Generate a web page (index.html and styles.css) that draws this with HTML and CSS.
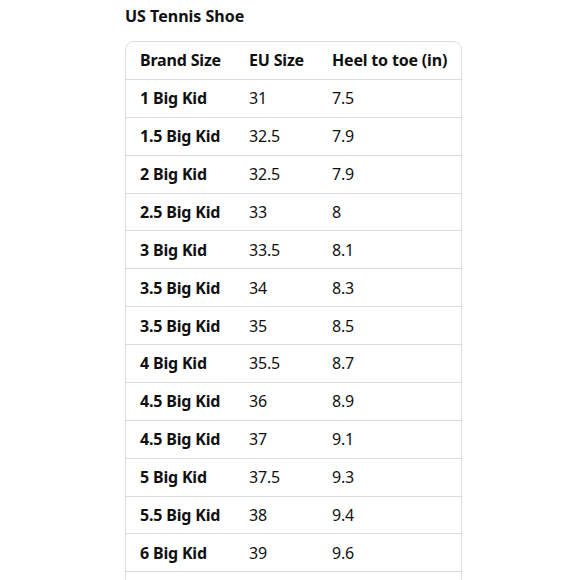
FILE: index.html
```html
<!DOCTYPE html>
<html>
<head>
<meta charset="utf-8">
<link rel="stylesheet" href="styles.css">
</head>
<body>
<div class="wrap">
  <h2 class="title">US Tennis Shoe</h2>
  <div class="card">
    <table class="sizes">
      <thead>
        <tr><th>Brand Size</th><th>EU Size</th><th>Heel to toe (in)</th></tr>
      </thead>
      <tbody>
        <tr><th>1 Big Kid</th><td>31</td><td>7.5</td></tr>
        <tr><th>1.5 Big Kid</th><td>32.5</td><td>7.9</td></tr>
        <tr><th>2 Big Kid</th><td>32.5</td><td>7.9</td></tr>
        <tr><th>2.5 Big Kid</th><td>33</td><td>8</td></tr>
        <tr><th>3 Big Kid</th><td>33.5</td><td>8.1</td></tr>
        <tr><th>3.5 Big Kid</th><td>34</td><td>8.3</td></tr>
        <tr><th>3.5 Big Kid</th><td>35</td><td>8.5</td></tr>
        <tr><th>4 Big Kid</th><td>35.5</td><td>8.7</td></tr>
        <tr><th>4.5 Big Kid</th><td>36</td><td>8.9</td></tr>
        <tr><th>4.5 Big Kid</th><td>37</td><td>9.1</td></tr>
        <tr><th>5 Big Kid</th><td>37.5</td><td>9.3</td></tr>
        <tr><th>5.5 Big Kid</th><td>38</td><td>9.4</td></tr>
        <tr><th>6 Big Kid</th><td>39</td><td>9.6</td></tr>
        <tr class="empty"><th></th><td></td><td></td></tr>
      </tbody>
    </table>
  </div>
</div>
</body>
</html>
```
FILE: styles.css
```css
html, body {
  margin: 0;
  padding: 0;
  background: #ffffff;
}
body {
  font-family: "Noto Sans", "DejaVu Sans", sans-serif;
  color: #0f1111;
  overflow: hidden;
}
.wrap {
  padding: 4px 0 0 125px;
}
.title {
  font-size: 16px;
  font-weight: 700;
  margin: 0 0 13px 0;
  line-height: 24px;
}
.card {
  display: inline-block;
  border: 1px solid #dcdcdc;
  border-radius: 9px;
  overflow: hidden;
}
.sizes {
  border-collapse: collapse;
  font-size: 16px;
  letter-spacing: -0.18px;
}
.sizes th, .sizes td {
  text-align: left;
  padding: 0 14px;
  height: 36.88px;
  line-height: 20px;
  white-space: nowrap;
}
.sizes th {
  font-weight: 700;
}
.sizes td {
  font-weight: 400;
}
.sizes tbody tr {
  border-top: 1px solid #dcdcdc;
}
```
